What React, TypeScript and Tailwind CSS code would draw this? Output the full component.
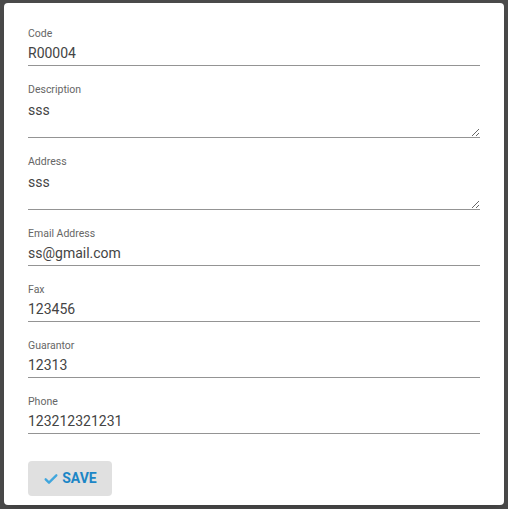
import type { ReactNode } from "react";

const fields = [
  { label: "Code", value: "R00004" },
  { label: "Description", value: "sss", multiline: true },
  { label: "Address", value: "sss", multiline: true },
  { label: "Email Address", value: "ss@gmail.com" },
  { label: "Fax", value: "123456" },
  { label: "Guarantor", value: "12313" },
  { label: "Phone", value: "123212321231" },
];

const Field = ({ label, children }: { label: string; children: ReactNode }) => (
  <div className="flex flex-col mb-[17px]">
    <label className="text-[10.5px] leading-[14px] text-[#666666]">{label}</label>
    {children}
  </div>
);

export default function App() {
  return (
    <div
      className="w-[508px] h-[509px] bg-[#4a4a4a] pt-[3px] pl-[4px] overflow-hidden"
      style={{ fontFamily: "Roboto, 'Liberation Sans', sans-serif" }}
    >
      <div className="w-[500px] h-[502px] bg-white rounded-[4px] px-6 pt-[24px] shadow-lg">
        {fields.map((f) =>
          f.multiline ? (
            <Field key={f.label} label={f.label}>
              <textarea
                defaultValue={f.value}
                className="h-[41px] pt-[4px] text-[14px] leading-[18px] text-[#444444] border-b border-[#949494] outline-none resize-y"
              />
            </Field>
          ) : (
            <Field key={f.label} label={f.label}>
              <input
                defaultValue={f.value}
                className="h-[25px] text-[14px] text-[#444444] border-b border-[#949494] outline-none"
              />
            </Field>
          )
        )}
        <button className="mt-[27px] w-[84px] h-[35px] rounded-[4px] bg-[#e0e0e0] flex items-center justify-center gap-[3px] text-[14px] font-bold text-[#1c86c6]">
          <svg viewBox="0 0 24 24" className="w-[16px] h-[16px]" fill="none" stroke="#40a6dd" strokeWidth={3.5} strokeLinecap="round" strokeLinejoin="round">
            <path d="M4 12.5l5 5L20 6.5" />
          </svg>
          SAVE
        </button>
      </div>
    </div>
  );
}
